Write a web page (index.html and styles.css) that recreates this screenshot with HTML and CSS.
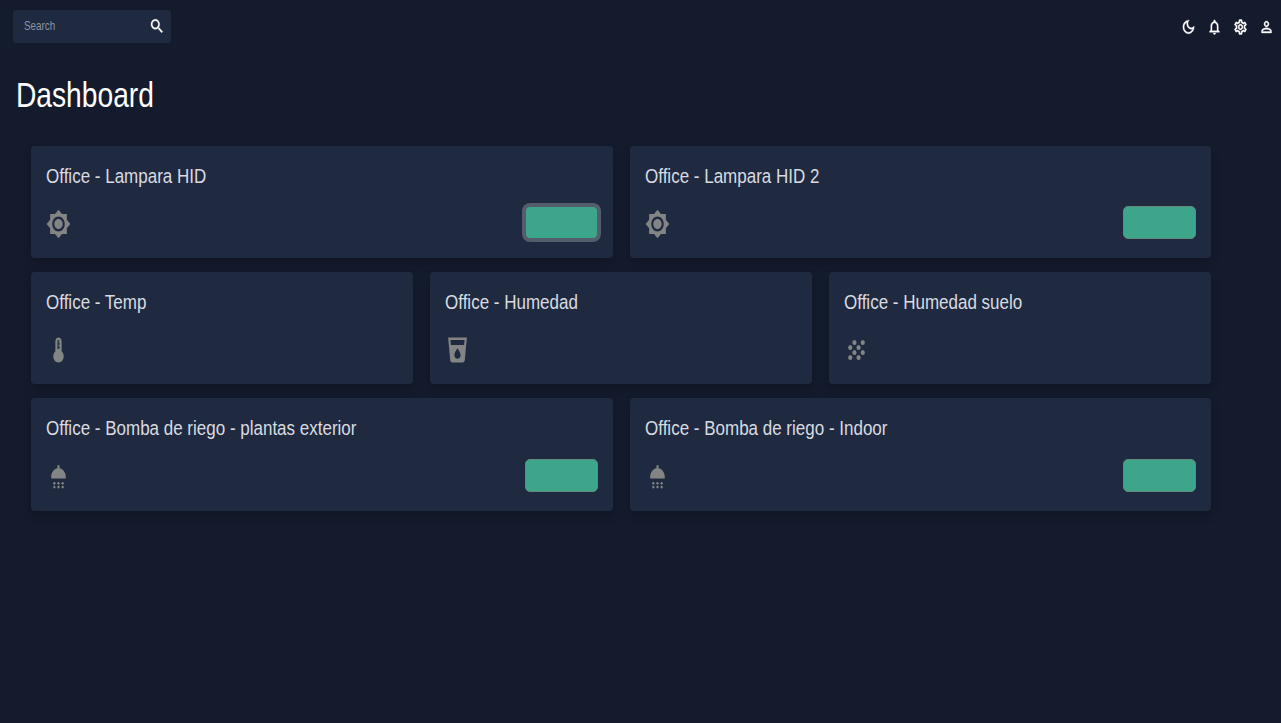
FILE: index.html
```html
<!DOCTYPE html>
<html lang="es">
<head>
<meta charset="utf-8">
<title>Dashboard</title>
<link rel="stylesheet" href="styles.css">
</head>
<body>
<svg class="defs" width="0" height="0">
  <symbol id="sun" viewBox="0 0 24 24" preserveAspectRatio="none"><path d="M20 8.69V4h-4.69L12 .69 8.69 4H4v4.69L.69 12 4 15.31V20h4.69L12 23.31 15.31 20H20v-4.69L23.31 12 20 8.69zM12 18c-3.31 0-6-2.69-6-6s2.69-6 6-6 6 2.69 6 6-2.69 6-6 6zm0-10c-2.21 0-4 1.79-4 4s1.79 4 4 4 4-1.79 4-4-1.79-4-4-4z"/></symbol>
  <symbol id="thermo" viewBox="0 0 24 24" preserveAspectRatio="none"><path d="M15 13V5c0-1.66-1.34-3-3-3S9 3.34 9 5v8c-1.21.91-2 2.37-2 4 0 2.76 2.24 5 5 5s5-2.24 5-5c0-1.63-.79-3.09-2-4zm-4-8c0-.55.45-1 1-1s1 .45 1 1h-1v1h1v2h-1v1h1v2h-2V5z"/></symbol>
  <symbol id="drink" viewBox="0 0 24 24" preserveAspectRatio="none"><path d="M3 2l2.01 18.23C5.13 21.23 5.97 22 7 22h10c1.03 0 1.87-.77 1.99-1.77L21 2H3zm9 17c-1.66 0-3-1.34-3-3 0-2 3-5.4 3-5.4s3 3.4 3 5.4c0 1.66-1.34 3-3 3zm6.33-11H5.67l-.44-4h13.55l-.45 4z"/></symbol>
  <symbol id="grain" viewBox="0 0 24 24" preserveAspectRatio="none"><circle cx="10" cy="6" r="2"/><circle cx="18" cy="6" r="2"/><circle cx="6" cy="10" r="2"/><circle cx="14" cy="10" r="2"/><circle cx="10" cy="14" r="2"/><circle cx="18" cy="14" r="2"/><circle cx="6" cy="18" r="2"/><circle cx="14" cy="18" r="2"/></symbol>
  <symbol id="shower" viewBox="0 0 24 24" preserveAspectRatio="none"><path d="M19 13v-1c0-3.53-2.61-6.43-6-6.92V2.500h-2v2.580C7.610 5.570 5 8.470 5 12v1.200h14z"/><circle cx="8" cy="17" r="1.1"/><circle cx="12" cy="17" r="1.1"/><circle cx="16" cy="17" r="1.1"/><circle cx="8" cy="20" r="1.1"/><circle cx="12" cy="20" r="1.1"/><circle cx="16" cy="20" r="1.1"/></symbol>
  <symbol id="search" viewBox="0 0 24 24" preserveAspectRatio="none"><path d="M15.500 14h-.79l-.28-.27C15.410 12.590 16 11.110 16 9.500 16 5.910 13.090 3 9.500 3S3 5.910 3 9.500 5.910 16 9.500 16c1.610 0 3.090-.59 4.230-1.570l.27.28v.79l5 4.990L20.490 19l-4.990-5zm-6 0C7.010 14 5 11.990 5 9.500S7.010 5 9.500 5 14 7.010 14 9.500 11.990 14 9.500 14z"/></symbol>
  <symbol id="moon" viewBox="0 0 24 24" preserveAspectRatio="none"><path d="M9.370 5.510c-.18.64-.27 1.310-.27 1.990 0 4.080 3.320 7.400 7.400 7.400.68 0 1.350-.09 1.990-.27C17.450 17.190 14.930 19 12 19c-3.860 0-7-3.140-7-7 0-2.930 1.810-5.450 4.370-6.490zM12 3c-4.970 0-9 4.030-9 9s4.030 9 9 9 9-4.030 9-9c0-.46-.04-.92-.1-1.360-.98 1.370-2.580 2.260-4.400 2.260-2.980 0-5.400-2.420-5.400-5.400 0-1.810.89-3.420 2.260-4.400-.44-.06-.9-.1-1.360-.1z"/></symbol>
  <symbol id="bell" viewBox="0 0 24 24" preserveAspectRatio="none"><path d="M12 22c1.100 0 2-.9 2-2h-4c0 1.100.9 2 2 2zm6-6v-5c0-3.070-1.630-5.640-4.500-6.320V4c0-.83-.67-1.500-1.500-1.500s-1.500.67-1.500 1.500v.68C7.640 5.360 6 7.920 6 11v5l-2 2v1h16v-1l-2-2zm-2 1H8v-6c0-2.480 1.510-4.500 4-4.500s4 2.020 4 4.500v6z"/></symbol>
  <symbol id="gear" viewBox="0 0 24 24" preserveAspectRatio="none"><path d="M19.430 12.980c.04-.32.07-.64.07-.98 0-.34-.03-.66-.07-.98l2.110-1.650c.19-.15.24-.42.12-.64l-2-3.460c-.09-.16-.26-.25-.44-.25-.06 0-.12.01-.17.03l-2.490 1c-.52-.4-1.080-.73-1.690-.98l-.38-2.650C14.460 2.180 14.250 2 14 2h-4c-.25 0-.46.18-.49.42l-.38 2.650c-.61.25-1.170.59-1.690.98l-2.490-1c-.06-.02-.12-.03-.18-.03-.17 0-.34.09-.43.25l-2 3.460c-.13.22-.07.49.12.64l2.110 1.650c-.04.32-.07.65-.07.98 0 .33.03.66.07.98l-2.110 1.650c-.19.15-.24.42-.12.64l2 3.460c.09.16.26.25.44.25.06 0 .12-.01.17-.03l2.490-1c.52.4 1.080.73 1.690.98l.38 2.650c.03.24.24.42.49.42h4c.25 0 .46-.18.49-.42l.38-2.650c.61-.25 1.170-.59 1.690-.98l2.490 1c.06.02.12.03.18.03.17 0 .34-.09.43-.25l2-3.460c.12-.22.07-.49-.12-.64l-2.110-1.650zm-1.980-1.710c.04.31.05.52.05.73 0 .21-.02.43-.05.73l-.14 1.130.89.7 1.080.84-.7 1.210-1.270-.51-1.040-.42-.9.68c-.43.32-.84.56-1.250.73l-1.060.43-.16 1.130-.2 1.350h-1.400l-.19-1.350-.16-1.130-1.060-.43c-.43-.18-.83-.41-1.230-.71l-.91-.7-1.060.43-1.270.51-.7-1.210 1.080-.84.89-.7-.14-1.130c-.03-.31-.05-.54-.05-.74s.02-.43.05-.73l.14-1.130-.89-.7-1.080-.84.7-1.210 1.270.51 1.040.42.9-.68c.43-.32.84-.56 1.250-.73l1.060-.43.16-1.130.2-1.350h1.390l.19 1.350.16 1.130 1.060.43c.43.18.83.41 1.230.71l.91.7 1.060-.43 1.270-.51.7 1.210-1.070.85-.89.7.14 1.130zM12 8c-2.210 0-4 1.790-4 4s1.790 4 4 4 4-1.790 4-4-1.790-4-4-4zm0 6c-1.100 0-2-.9-2-2s.9-2 2-2 2 .9 2 2-.9 2-2 2z"/></symbol>
  <symbol id="person" viewBox="0 0 24 24" preserveAspectRatio="none"><path d="M12 5.900c1.160 0 2.100.94 2.100 2.100s-.94 2.100-2.100 2.100S9.900 9.160 9.900 8s.94-2.100 2.100-2.100m0 9c2.970 0 6.100 1.460 6.100 2.100v1.100H5.900V17c0-.64 3.130-2.100 6.100-2.100M12 4C9.790 4 8 5.790 8 8s1.790 4 4 4 4-1.790 4-4-1.790-4-4-4zm0 9c-2.670 0-8 1.340-8 4v3h16v-3c0-2.660-5.330-4-8-4z"/></symbol>
</svg>
<header class="topbar">
  <div class="search"><span class="search-label">Search</span><svg class="icon-small"><use href="#search"/></svg></div>
  <nav class="actions">
    <svg class="icon-small"><use href="#moon"/></svg>
    <svg class="icon-small"><use href="#bell"/></svg>
    <svg class="icon-small"><use href="#gear"/></svg>
    <svg class="icon-small"><use href="#person"/></svg>
  </nav>
</header>
<h1 class="title">Dashboard</h1>
<main class="grid">
  <section class="card half"><h2 class="name">Office - Lampara HID</h2><div class="body"><svg class="icon"><use href="#sun"/></svg><button class="toggle focused"></button></div></section>
  <section class="card half"><h2 class="name">Office - Lampara HID 2</h2><div class="body"><svg class="icon"><use href="#sun"/></svg><button class="toggle"></button></div></section>
  <section class="card third"><h2 class="name">Office - Temp</h2><div class="body"><svg class="icon"><use href="#thermo"/></svg></div></section>
  <section class="card third"><h2 class="name">Office - Humedad</h2><div class="body"><svg class="icon"><use href="#drink"/></svg></div></section>
  <section class="card third"><h2 class="name">Office - Humedad suelo</h2><div class="body"><svg class="icon"><use href="#grain"/></svg></div></section>
  <section class="card half"><h2 class="name">Office - Bomba de riego - plantas exterior</h2><div class="body"><svg class="icon"><use href="#shower"/></svg><button class="toggle"></button></div></section>
  <section class="card half"><h2 class="name">Office - Bomba de riego - Indoor</h2><div class="body"><svg class="icon"><use href="#shower"/></svg><button class="toggle"></button></div></section>
</main>
</body>
</html>
```
FILE: styles.css
```css
* { box-sizing: border-box; }
body {
  margin: 0;
  height: 723px;
  overflow: hidden;
  background: #141b2d;
  color: #fff;
  font-family: "Liberation Sans", Arial, sans-serif;
}
.defs { display: none; }
svg { display: block; fill: currentColor; flex: none; }
.topbar {
  display: flex;
  justify-content: space-between;
  padding: 10px 7.500px 0 13px;
}
.search {
  display: flex;
  align-items: center;
  justify-content: space-between;
  width: 158px;
  height: 33px;
  padding: 0 6px 1px 11px;
  border-radius: 3px;
  background: #1f2a40;
}
.search-label {
  padding-bottom: 2px;
  font-size: 13px;
  color: #8c93a0;
  transform: scaleX(.76);
  transform-origin: left;
}
.icon-small {
  width: 15px;
  height: 18px;
  stroke: currentColor;
  stroke-width: .5px;
}
.search .icon-small { width: 16px; height: 18.500px; }
.actions { display: flex; align-items: center; gap: 10.800px; }
.title {
  margin: 32px 0 0 16px;
  font-size: 34.500px;
  font-weight: 400;
  line-height: 40px;
  transform: scaleX(.817);
  transform-origin: left;
}
.grid {
  display: grid;
  grid-template-columns: repeat(6, 1fr);
  grid-auto-rows: 112.200px;
  gap: 14px 17px;
  margin: 31px 70px 0 31px;
}
.card {
  padding: 17px 15px 0;
  border-radius: 4px;
  background: #1f2a40;
  box-shadow: 0 5px 10px rgba(0, 0, 0, .2);
}
.half { grid-column: span 3; }
.third { grid-column: span 2; }
.name {
  margin: 0;
  width: max-content;
  font-size: 20.500px;
  font-weight: 400;
  line-height: 26px;
  color: #d9dbe0;
  transform: scaleX(.829);
  transform-origin: left;
}
.body {
  display: flex;
  align-items: center;
  justify-content: space-between;
  height: 34px;
  margin-top: 16.700px;
}
.icon { width: 25px; height: 30px; margin-top: 3px; color: #838584; }
.toggle {
  width: 73px;
  height: 33px;
  padding: 0;
  border: 1px solid #618a80;
  border-radius: 5px;
  background: #3da58a;
}
.focused { border-color: #545d6c; box-shadow: 0 0 0 3px #545d6c; }
```
